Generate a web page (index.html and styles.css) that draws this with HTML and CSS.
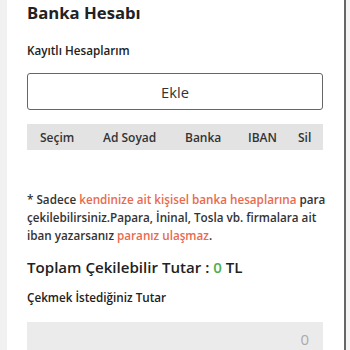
FILE: index.html
```html
<!DOCTYPE html>
<html lang="tr">
<head>
<meta charset="utf-8">
<link rel="stylesheet" href="styles.css">
</head>
<body>
<div class="frame">
  <div class="strip"></div>
  <main class="panel">
    <h1 class="title">Banka Hesabı</h1>
    <h2 class="label label-accounts">Kayıtlı Hesaplarım</h2>
    <button class="add-btn">Ekle</button>
    <div class="table-head">
      <span class="col">Seçim</span>
      <span class="col">Ad Soyad</span>
      <span class="col">Banka</span>
      <span class="col">IBAN</span>
      <span class="col">Sil</span>
    </div>
    <p class="note">* Sadece <span class="warn">kendinize ait kişisel banka hesaplarına</span> para çekilebilirsiniz.Papara, İninal, Tosla vb. firmalara ait iban yazarsanız <span class="warn">paranız ulaşmaz</span>.</p>
    <div class="total">Toplam Çekilebilir Tutar : <span class="zero">0</span> TL</div>
    <h2 class="label label-amount">Çekmek İstediğiniz Tutar</h2>
    <div class="amount-input">0</div>
  </main>
  <div class="edge"></div>
</div>
</body>
</html>
```
FILE: styles.css
```css
* { box-sizing: border-box; }
html, body { margin: 0; padding: 0; }
body {
  font-family: "Open Sans", "Noto Sans", sans-serif;
  color: #222;
  background: #fff;
  width: 350px;
  height: 350px;
  overflow: hidden;
}
.frame {
  display: flex;
  height: 350px;
}
.strip {
  width: 7px;
  background: #f1f1f1;
  flex: none;
}
.panel {
  flex: none;
  width: 339px;
  padding: 0 21px 0 20px;
  background: #fff;
  border-right: 2px solid #666;
}
.edge {
  flex: 1;
  background: #f3f3f3;
}
.title {
  margin: 0;
  padding-top: 1px;
  font-size: 16.7px;
  font-weight: 700;
  line-height: 24px;
  color: #222;
}
.label {
  margin: 0;
  font-size: 11.7px;
  font-weight: 600;
  line-height: 18px;
  color: #222;
}
.label-accounts { margin-top: 16px; }
.add-btn {
  display: block;
  width: 100%;
  height: 37px;
  margin-top: 14px;
  border: 1px solid #666;
  border-radius: 3px;
  background: #fff;
  font-family: inherit;
  font-size: 14.7px;
  color: #333;
  padding: 0;
}
.table-head {
  display: grid;
  grid-template-columns: 63px 82px 63px 50px 1fr;
  align-items: center;
  height: 26px;
  margin-top: 14px;
  padding-left: 13px;
  background: #e3e3e3;
  font-size: 12px;
  font-weight: 600;
  color: #333;
  white-space: nowrap;
}
.note {
  margin: 40px -10px 0 0;
  font-size: 11.7px;
  font-weight: 600;
  line-height: 18px;
  color: #333;
}
.warn { color: #e86a4e; }
.total {
  margin-top: 11px;
  font-size: 15.1px;
  font-weight: 600;
  line-height: 24px;
  color: #222;
}
.zero { color: #4caf50; }
.label-amount { margin-top: 9px; }
.amount-input {
  margin-top: 16px;
  height: 40px;
  background: #ebebeb;
  text-align: right;
  padding: 7px 14px 0 0;
  font-size: 15px;
  color: #aaa;
}
```
